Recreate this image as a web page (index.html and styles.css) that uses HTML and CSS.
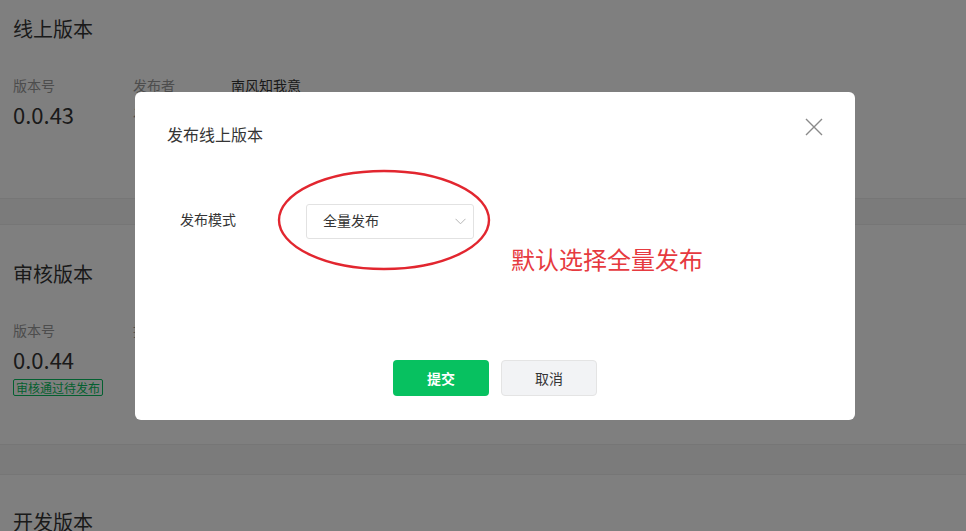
FILE: index.html
```html
<!DOCTYPE html>
<html lang="zh-CN">
<head>
<meta charset="utf-8">
<title>版本管理</title>
<link rel="stylesheet" href="styles.css">
</head>
<body>
<main class="page">
  <section class="card card-online">
    <h2 class="card-title">线上版本</h2>
    <div class="info">
      <div class="col col-ver">
        <div class="label">版本号</div>
        <div class="version">0.0.43</div>
      </div>
      <div class="col col-meta">
        <div class="meta-row"><span class="label meta-key">发布者</span><span class="meta-val">南风知我意</span></div>
        <div class="meta-row"><span class="label meta-key">发布时间</span><span class="meta-val">2020-08-18 10:12:30</span></div>
      </div>
    </div>
  </section>
  <section class="card card-audit">
    <h2 class="card-title">审核版本</h2>
    <div class="info">
      <div class="col col-ver">
        <div class="label">版本号</div>
        <div class="version">0.0.44</div>
        <span class="tag">审核通过待发布</span>
      </div>
      <div class="col col-meta">
        <div class="meta-row"><span class="label meta-key">提交者</span><span class="meta-val">南风知我意</span></div>
      </div>
    </div>
  </section>
  <section class="card card-dev">
    <h2 class="card-title">开发版本</h2>
  </section>
</main>

<div class="mask">
  <div class="dialog">
    <h3 class="dialog-title">发布线上版本</h3>
    <button class="close" type="button" aria-label="关闭">
      <svg width="18" height="18" viewBox="0 0 18 18"><path d="M1 1L17 17M17 1L1 17" stroke="#8a8a8a" stroke-width="1.4" fill="none"/></svg>
    </button>
    <div class="form-row">
      <label class="form-label">发布模式</label>
      <div class="select">
        <span class="select-text">全量发布</span>
        <svg class="chevron" width="11" height="7" viewBox="0 0 11 7"><path d="M0.5 0.8L5.5 5.8L10.5 0.8" stroke="#b5b5b5" stroke-width="1" fill="none"/></svg>
      </div>
    </div>
    <div class="footer">
      <button class="btn btn-primary" type="button">提交</button>
      <button class="btn btn-default" type="button">取消</button>
    </div>
    <svg class="mark-ellipse" width="214" height="102" viewBox="0 0 214 102"><ellipse cx="107" cy="51" rx="105" ry="49" stroke="#e2262f" stroke-width="2.4" fill="none"/></svg>
    <div class="mark-text">默认选择全量发布</div>
  </div>
</div>
</body>
</html>
```

FILE: styles.css
```css
* { box-sizing: border-box; }
html, body { margin: 0; padding: 0; }
body {
  font-family: "Noto Sans CJK SC", "Noto Sans", sans-serif;
  background: #f6f6f7;
  color: #353535;
  width: 966px;
  height: 531px;
  overflow: hidden;
}
.page { display: flex; flex-direction: column; gap: 25px; }
.card {
  background: #fff;
  border-bottom: 1px solid #ececec;
  padding: 0 13px;
}
.card-online { padding-top: 15px; height: 199px; }
.card-audit { padding-top: 35px; height: 221px; border-top: 1px solid #ececec; }
.card-dev { padding-top: 33px; height: 120px; border-top: 1px solid #ececec; margin-top: 4px; }
.card-title {
  margin: 0;
  font-size: 20px;
  font-weight: 400;
  line-height: 28px;
  color: #353535;
}
.info { display: flex; margin-top: 31px; }
.col-ver { width: 120px; }
.label { font-size: 14px; color: #9a9a9a; line-height: 22px; display: block; }
.version { font-size: 22px; line-height: 30px; margin-top: 3px; color: #353535; }
.meta-row { display: flex; line-height: 22px; margin-bottom: 4px; }
.meta-key { width: 98px; }
.meta-val { font-size: 14px; color: #353535; }
.tag {
  display: inline-block;
  font-size: 12px;
  line-height: 15px;
  padding: 0 2px;
  border: 1px solid #07c160;
  color: #07c160;
  border-radius: 2px;
  margin-top: 3px;
}

.mask {
  position: fixed;
  inset: 0;
  background: rgba(0, 0, 0, 0.5);
  padding: 92px 0 0 135px;
}
.dialog {
  position: relative;
  width: 720px;
  height: 328px;
  background: #fff;
  border-radius: 6px;
  padding: 30px 32px 24px;
  display: flex;
  flex-direction: column;
}
.dialog-title {
  margin: 0;
  font-size: 16px;
  font-weight: 400;
  line-height: 24px;
  color: #353535;
}
.close {
  position: absolute;
  top: 26px;
  right: 32px;
  width: 18px;
  height: 18px;
  padding: 0;
  border: 0;
  background: none;
  display: flex;
}
.form-row {
  display: flex;
  align-items: center;
  margin-top: 58px;
  padding-left: 13px;
}
.form-label { width: 126px; font-size: 14px; line-height: 20px; color: #353535; padding-bottom: 5px; }
.select {
  width: 168px;
  height: 35px;
  border: 1px solid #e2e2e2;
  border-radius: 3px;
  display: flex;
  align-items: center;
  justify-content: space-between;
  padding: 0 7px 0 16px;
}
.select-text { font-size: 14px; line-height: 20px; color: #353535; padding-bottom: 4px; }
.chevron { margin-top: -1px; }
.footer {
  margin-top: auto;
  display: flex;
  justify-content: center;
  gap: 12px;
}
.btn {
  width: 96px;
  height: 36px;
  border-radius: 4px;
  font-family: inherit;
  font-size: 14px;
}
.btn-primary {
  background: #07c160;
  border: 0;
  color: #fff;
  font-weight: 700;
}
.btn-default {
  background: #f2f3f5;
  border: 1px solid #e4e4e4;
  color: #353535;
}
.mark-ellipse {
  position: absolute;
  left: 142px;
  top: 77px;
}
.mark-text {
  position: absolute;
  left: 376px;
  top: 153px;
  font-size: 24px;
  line-height: 28px;
  color: #e63a40;
  white-space: nowrap;
}
```
